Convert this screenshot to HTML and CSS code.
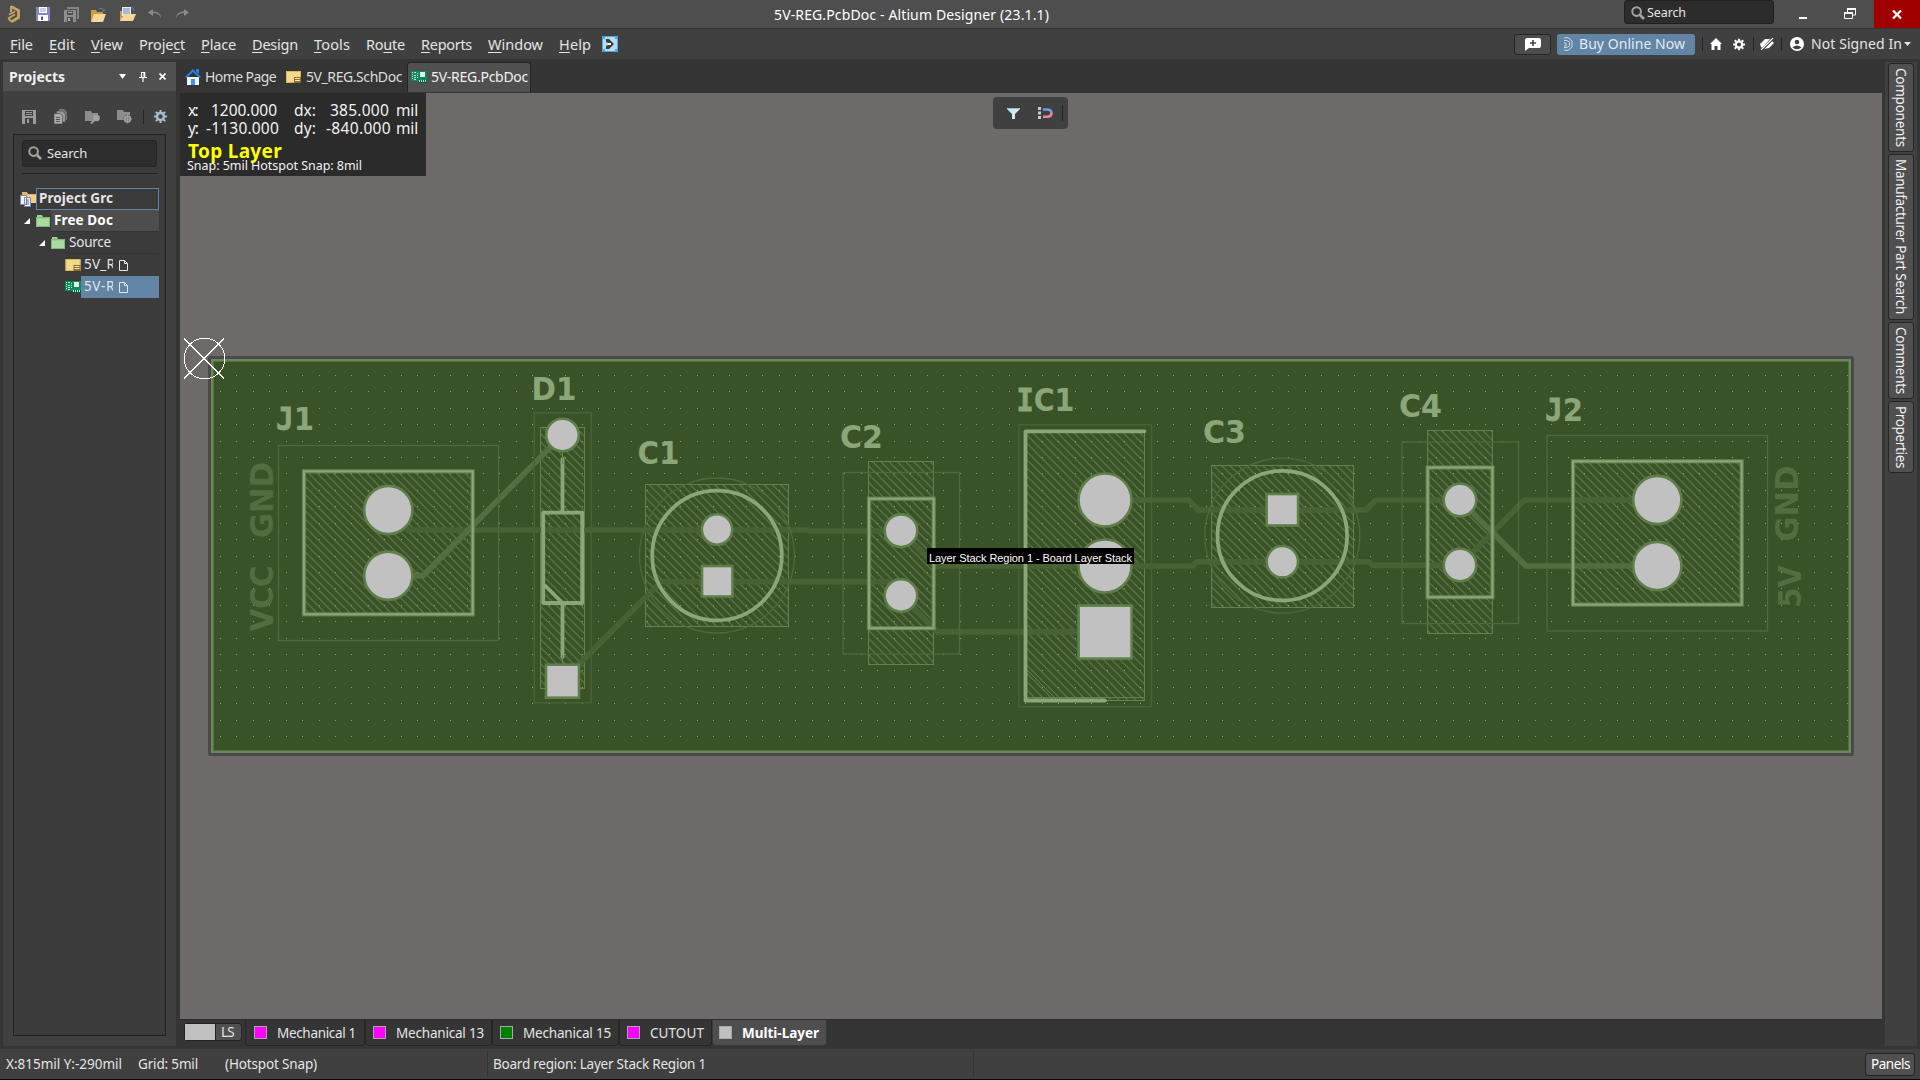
FILE: index.html
```
<!DOCTYPE html>
<html lang="en">
<head>
<meta charset="utf-8">
<title>5V-REG.PcbDoc - Altium Designer (23.1.1)</title>
<link rel="stylesheet" href="styles.css">
</head>
<body>
<svg class="defs" width="0" height="0">
  <defs>
    <symbol id="i-save" viewBox="0 0 14 14"><path fill-rule="evenodd" d="M0 0h14v14H0zM3 1v5h8V1zM3 8v6h8V8z" fill="currentColor"/><path d="M4 2h6v1H4zM4 4h6v1H4zM5 9h2v4H5z" fill="currentColor"/></symbol>
    <symbol id="i-sch" viewBox="0 0 15 12"><path d="M0 0h15v12H0z" fill="#f2d98c"/><path d="M.5 .5h14v11H.5z" fill="none" stroke="#d9b85c"/><path d="M8 6h7v6H8z" fill="#8a6c26"/><path d="M9 7h5v1H9zM9 9h5v1H9z" fill="#f7e6ae"/></symbol>
    <symbol id="i-pcb" viewBox="0 0 16 12"><path d="M0 0h16v10H0z" fill="#0b8a5c"/><path d="M3 1h2v1H3zM3 4h2v1H3zM3 6h2v1H3zM3 8h2v1H3zM1 1h1v1H1zM1 3h1v1H1zM1 5h1v1H1zM1 7h1v1H1zM6 2h1v1H6zM6 4h1v1H6zM6 6h1v1H6z" fill="#b6ecd4"/><path d="M9 1h5v5H9z" fill="#e4f5ec"/><path d="M6 9h10v3H8V9z" fill="#04613d"/><path d="M8 9h1v2H8zM10 9h1v2h-1zM12 9h1v2h-1zM14 9h1v2h-1z" fill="#b6ecd4"/></symbol>
    <symbol id="i-folder" viewBox="0 0 14 12"><path d="M0 2h1V0h5l1 2h7v10H0z" fill="#9bd08f"/><path d="M0 4h14v8H0z" fill="#a9dba0"/><path d="M.5 2.5h13v9H.5z" fill="none" stroke="#7fb877"/></symbol>
    <symbol id="i-doc" viewBox="0 0 9 11"><path d="M.5 .5h5l3 3v7h-8zM5.500 .5v3h3" fill="none" stroke="#e6e6e6"/></symbol>
    <symbol id="i-search" viewBox="0 0 14 14"><circle cx="5.600" cy="5.600" r="4.300" fill="none" stroke="#a3a3a3" stroke-width="2"/><path d="M9 9l4 4" stroke="#a3a3a3" stroke-width="2.600"/></symbol>
    <symbol id="i-gear" viewBox="0 0 14 14"><circle cx="7" cy="7" r="3.700" fill="none" stroke="currentColor" stroke-width="2.600"/><path d="M7 0v2.500M7 11.500V14M0 7h2.500M11.500 7H14M2 2l1.800 1.800M10.200 10.200L12 12M12 2l-1.800 1.800M3.800 10.200L2 12" stroke="currentColor" stroke-width="2.200"/></symbol>
    <symbol id="i-fold" viewBox="0 0 16 14"><path d="M0 1h6l1 2h6v8H0z" fill="#8d8d8d"/></symbol>
  </defs>
</svg>

<header class="titlebar">
  <div class="quick">
    <svg class="q1" width="14" height="18" viewBox="0 0 14 18"><path d="M4 1.500l7.500 4v7L5 16.500" fill="none" stroke="#c9a660" stroke-width="2.800"/><path d="M4 1v6M2 9.500l6-3M1 13.500l7-4M2.500 12v3l3 2" fill="none" stroke="#c9a660" stroke-width="1.900"/></svg>
    <svg class="q2" width="14" height="14" viewBox="0 0 14 14"><path d="M0 0h14v14H0z" fill="#8487c4"/><path d="M3 0h8v6H3zM2 8h10v6H2z" fill="#fff"/><path d="M4 1.500h6v1H4zM4 3.500h6v1H4z" fill="#9a9cc8"/><path d="M5 9.500h2V13H5z" fill="#555a88"/></svg>
    <svg class="q3" width="15" height="15" viewBox="0 0 15 15"><path d="M3 0h12v12h-2V2H3z" fill="#858585"/><path fill-rule="evenodd" d="M0 3h12v12H0zM3 4v4h6V4zM3 10v5h6v-5z" fill="#8f8f8f"/><path d="M4 5h4v1H4zM4 11h2v3H4z" fill="#aaa"/></svg>
    <svg class="q4" width="17" height="15" viewBox="0 0 17 15"><path d="M1 3h5l1 2h6v9H1z" fill="#cf9b45"/><path d="M4 7h12l-3 8H1z" fill="#f5d799"/><path d="M9 2q4-2 5 2m-2-1l2 1 1-2" fill="none" stroke="#4d87ac"/></svg>
    <svg class="q5" width="17" height="16" viewBox="0 0 17 16"><path d="M3 1h9v9H3z" fill="#e7edf6"/><path d="M4 3h7M4 5h7M4 7h7" stroke="#6b86b5"/><path d="M1 5h2v10H1z" fill="#cf9b45"/><path d="M5 8h12l-3 7H1z" fill="#f5d799"/><path d="M12 1q3 0 3 4" fill="none" stroke="#4d87ac"/></svg>
    <svg class="q6" width="14" height="11" viewBox="0 0 14 11"><path d="M13 11Q13 4 5 4V7L0 3.500 5 0v2.500Q14 2.500 13 11z" fill="#8b8b8b"/></svg>
    <svg class="q7" width="14" height="11" viewBox="0 0 14 11"><path d="M1 11Q1 4 9 4V7L14 3.500 9 0v2.500Q0 2.500 1 11z" fill="#8b8b8b"/></svg>
  </div>
  <div class="doc-title"><span data-w="275">5V-REG.PcbDoc - Altium Designer (23.1.1)</span></div>
  <div class="title-search"><svg width="14" height="14"><use href="#i-search"/></svg><span data-w="39">Search</span></div>
  <div class="winctl">
    <svg class="min" width="8" height="2"><path d="M0 0h8v2H0z" fill="#fff"/></svg>
    <svg class="res" width="12" height="11" viewBox="0 0 12 11"><path d="M3.500 4V1H11.500V7H8.500" fill="none" stroke="#fff"/><path d="M3 0h9v2H3z" fill="#fff"/><path d="M.5 4.500h8v6h-8z" fill="none" stroke="#fff"/><path d="M0 4h9v2H0z" fill="#fff"/></svg>
    <div class="close"><svg width="10" height="9" viewBox="0 0 10 9"><path d="M1 .5l8 8M9 .5l-8 8" stroke="#fff" stroke-width="2.200"/></svg></div>
  </div>
</header>

<nav class="menubar">
  <div class="menus">
    <span data-w="23"><u>F</u>ile</span><span data-w="26"><u>E</u>dit</span><span data-w="32"><u>V</u>iew</span><span data-w="46">Proje<u>c</u>t</span><span data-w="35"><u>P</u>lace</span><span data-w="46"><u>D</u>esign</span><span data-w="36"><u>T</u>ools</span><span data-w="39">Ro<u>u</u>te</span><span data-w="51"><u>R</u>eports</span><span data-w="55"><u>W</u>indow</span><span data-w="32"><u>H</u>elp</span>
    <svg class="run" width="16" height="16" viewBox="0 0 16 16"><path d="M0 0h16v16H0z" fill="#4aa8ea"/><path d="M3 1h10v2h2v10h-2v2H3v-2H1V3h2z" fill="#b9daf1"/><path d="M4 3h3l5 5-5 5H4V9.500h2v-3H4z" fill="#3c3c3c"/><path d="M6 7h3v2H6z" fill="#fff"/></svg>
  </div>
  <div class="account">
    <div class="comment"><svg width="16" height="13" viewBox="0 0 16 13"><path d="M2 0h12q2 0 2 2v6q0 2-2 2H4L0 13V2q0-2 2-2z" fill="#fff"/><path d="M8 2v6M5 5h6" stroke="#444" stroke-width="1.600"/></svg></div>
    <div class="buy"><svg width="10" height="14" viewBox="0 0 10 14"><path d="M1 1l4-.5 4 3.500v6L5 13.500 1 13M1 3.500h3L6.500 5v4L4 10.500H1M1 6h2v3H1" fill="none" stroke="#c7d7e6"/></svg><span data-w="106">Buy Online Now</span></div>
    <i class="sep s1"></i>
    <svg class="home" width="12" height="12" viewBox="0 0 12 12"><path d="M6 0l6 6h-1.500v6h-3V8h-3v4h-3V6H0z" fill="#fff"/></svg>
    <svg class="cog" width="12" height="13" viewBox="0 0 14 14"><use href="#i-gear"/></svg>
    <i class="sep s2"></i>
    <svg class="plug" width="14" height="12" viewBox="0 0 14 12"><path d="M1 9L0 6l5-5h5L2 10zM12 3l2 2-5 5-5 1 8-8z" fill="#fff"/><path d="M1 12L13 0" stroke="#fff" stroke-width="1.300"/><path d="M3 12L14 1" stroke="#404040" stroke-width=".8"/></svg>
    <i class="sep s3"></i>
    <svg class="user" width="14" height="14" viewBox="0 0 14 14"><circle cx="7" cy="7" r="7" fill="#fff"/><circle cx="7" cy="5" r="2.300" fill="#404040"/><path d="M2.500 10.500q4.500-4 9 0Q7 14 2.500 10.500z" fill="#404040"/></svg>
    <span class="signin" data-w="91">Not Signed In</span>
    <svg width="7" height="4" viewBox="0 0 7 4"><path d="M0 0h7L3.500 4z" fill="#e6e6e6"/></svg>
  </div>
</nav>

<main class="main">
  <aside class="panel">
    <div class="panel-head">
      <b data-w="56">Projects</b>
      <svg class="pa" width="7" height="5" viewBox="0 0 7 5"><path d="M0 0h7L3.500 5z" fill="#fff"/></svg>
      <svg class="pb" width="8" height="10" viewBox="0 0 8 10"><path d="M2.500 0v5M2 .5h4M5 0v5M5.700 0v5M0 5.500h8M4 5v5" stroke="#fff" fill="none" stroke-width="1.200"/></svg>
      <svg class="pc" width="7" height="7" viewBox="0 0 7 7"><path d="M.5 .5l6 6M6.500 .5l-6 6" stroke="#fff" stroke-width="1.700"/></svg>
    </div>
    <div class="panel-tools">
      <svg class="t1" width="14" height="14"><use href="#i-save"/></svg>
      <svg class="t2" width="14" height="15" viewBox="0 0 14 15"><path d="M5 0h5l3 3v8H5z" fill="#777"/><path d="M2.500 2h6l3 3v8h-9z" fill="#999" stroke="#404040" stroke-width=".6"/><path d="M0 4.500h6l2.500 2.500v8H0z" fill="#aaa" stroke="#404040" stroke-width=".6"/><path d="M2 8.500h4M2 10.500h4M2 12.500h4" stroke="#555"/></svg>
      <svg class="t3" width="16" height="14" viewBox="0 0 16 14"><use href="#i-fold"/><circle cx="11.500" cy="8" r="3.300" fill="#a3a3a3"/><path d="M9 10.500L6 13.500" stroke="#a3a3a3" stroke-width="1.800"/></svg>
      <svg class="t4" width="16" height="15" viewBox="0 0 16 15"><path d="M0 1h6l1 2h6v8H0z" fill="#8d8d8d"/><circle cx="10.500" cy="10" r="4.300" fill="#404040"/><circle cx="10.500" cy="10" r="2.800" fill="none" stroke="#a0a0a0" stroke-width="1.800"/><path d="M10.500 5.500v9M6 10h9M7.500 7l6 6M13.500 7l-6 6" stroke="#a0a0a0" stroke-width=".9"/></svg>
      <i class="sep"></i>
      <svg class="t5" width="13" height="13" viewBox="0 0 14 14"><use href="#i-gear"/></svg>
    </div>
    <div class="tree-box">
      <div class="tree-search"><svg width="14" height="14"><use href="#i-search"/></svg><span data-w="40">Search</span></div>
      <ul class="tree">
        <li class="r1"><svg width="16" height="15" viewBox="0 0 16 15"><path d="M2 0h5l1 2h8v9H2z" fill="#e3b566"/><path d="M3 3h13v8H3z" fill="#f3cf8c"/><path d="M.5 3.500h6v9h-6zM4.500 5.500h6v9h-6z" fill="#eef1fa" stroke="#7d86ac"/><path d="M6 8h3M6 10h3M6 12h3" stroke="#5f6fa5"/></svg><span class="box"><b data-w="74">Project Grc</b></span></li>
        <li class="r2"><svg class="arr" width="6" height="6"><path d="M6 0v6H0z" fill="#fff"/></svg><svg width="14" height="12"><use href="#i-folder"/></svg><span class="box"><b data-w="59">Free Doc</b></span></li>
        <li class="r3"><svg class="arr" width="6" height="6"><path d="M6 0v6H0z" fill="#fff"/></svg><svg width="14" height="12"><use href="#i-folder"/></svg><span class="box"><span data-w="42">Source</span></span></li>
        <li class="r4"><svg width="15" height="12"><use href="#i-sch"/></svg><span class="box"><span class="clip" data-w="31">5V_R</span><svg width="9" height="11"><use href="#i-doc"/></svg></span></li>
        <li class="r4 sel"><svg width="16" height="12"><use href="#i-pcb"/></svg><span class="box"><span class="clip" data-w="31">5V-R</span><svg width="9" height="11"><use href="#i-doc"/></svg></span></li>
      </ul>
    </div>
  </aside>

  <section class="work">
    <div class="tabs">
      <div class="tab home-tab"><svg width="16" height="16" viewBox="0 0 16 16"><path d="M2 8h12v8H2z" fill="#eef5fc"/><path d="M8 0l8 8-1.500 1L8 3 1.500 9 0 8z" fill="#2a83e8"/><path d="M11 0h3v5l-3-3z" fill="#2a83e8"/><path d="M6 10h4v6H6z" fill="#3b93f2"/></svg><span data-w="71">Home Page</span></div>
      <div class="tab sch-tab"><svg width="15" height="12"><use href="#i-sch"/></svg><span data-w="96">5V_REG.SchDoc</span></div>
      <div class="tab pcb-tab"><svg width="16" height="12"><use href="#i-pcb"/></svg><span data-w="97">5V-REG.PcbDoc</span></div>
    </div>

    <div class="canvas">
      <svg class="board" width="1702" height="926" viewBox="180 93 1702 926">
        <defs>
          <pattern id="hatch" width="8.220" height="8.220" patternUnits="userSpaceOnUse"><path d="M-1-1l11 11M7.220-1l3 3M-1 7.220l3 3" stroke="#66814f" stroke-width=".95"/></pattern>
        </defs>
        <rect x="209.500" y="357.500" width="1643" height="397" rx="1" fill="#3a5228" stroke="#4b4a4b" stroke-width="3"/>
        <rect x="212.500" y="360.500" width="1637" height="391" fill="none" stroke="#55713f" stroke-width="3"/>
        <rect x="212" y="360" width="1638" height="392" fill="none" stroke="#6b8857" stroke-width="2"/>

        <g class="hatched">
          <rect x="304" y="471" width="169" height="143"/>
          <rect x="540.500" y="427.500" width="44" height="261"/>
          <rect x="645.500" y="484.500" width="143" height="142"/>
          <rect x="868.500" y="461.500" width="65" height="203"/>
          <rect x="1026.500" y="431.500" width="118" height="269"/>
          <rect x="1211.500" y="465.500" width="142" height="142"/>
          <rect x="1427.500" y="430.500" width="65" height="203"/>
          <rect x="1573" y="461" width="169" height="143.500"/>
        </g>
        <path d="M1026 697.500h118M1027 670l29 29" stroke="#66814f" fill="none"/>

        <path id="dots" fill="#8ba677" shape-rendering="crispEdges"/>

        <g class="bottom-copper">
          <path d="M388 510l20 20H717 808l2 1h91L936 566H1105"/>
          <path d="M562.500 681L661 581.700H888L901 595.500 937 631.800H1105"/>
          <path d="M1105 500h83.500l10 10H1366l10-10h84"/>
          <path d="M1105 566h87.500l4-4.200H1369l4 3.500h87L1524.500 500H1657"/>
        </g>
        <g class="top-copper">
          <path d="M388 575.700h35L562.500 435"/>
          <path d="M1460 500l66 66h131"/>
        </g>

        <g class="court">
          <rect x="278.500" y="445.500" width="220" height="195"/>
          <rect x="843" y="472.500" width="116.500" height="181.500"/>
          <rect x="1402" y="442" width="116.500" height="181.500"/>
          <rect x="1547" y="435.500" width="220.500" height="195.500"/>
          <circle cx="717" cy="555.500" r="77.500"/>
          <circle cx="1282.300" cy="535.700" r="77.500"/>
        </g>
        <g class="court dim">
          <rect x="534.200" y="412.700" width="57" height="290"/>
          <rect x="1019" y="424.700" width="132.500" height="282"/>
        </g>

        <g class="silk-under">
          <rect x="304" y="471.300" width="168.700" height="143"/>
          <rect x="869" y="498.700" width="64.700" height="129.500"/>
          <rect x="1427.700" y="467.500" width="64.700" height="129.700"/>
          <rect x="1573" y="461.300" width="168.700" height="143.300"/>
        </g>
        <g class="silk">
          <rect x="304" y="471.300" width="168.700" height="143"/>
          <rect x="869" y="498.700" width="64.700" height="129.500"/>
          <rect x="1427.700" y="467.500" width="64.700" height="129.700"/>
          <rect x="1573" y="461.300" width="168.700" height="143.300"/>
        </g>
        <g class="silk bold">
          <circle cx="717" cy="555.500" r="64.800"/>
          <circle cx="1282.300" cy="535.700" r="64.800"/>
          <path d="M562.500 459V512.500M562.500 603V657M543.200 512.700h39v90.300h-39zM545 585.500l17.500 17.500"/>
          <path d="M1144.500 431.300H1025.500V700.500H1105"/>
        </g>
        <path d="M562.500 452v12M562.500 655v10" stroke="#66814f"/>

        <g class="pads">
          <circle cx="388.300" cy="510" r="24.100"/><circle cx="388.300" cy="575.700" r="24.100"/>
          <circle cx="562.500" cy="435" r="16.300"/><rect x="546" y="664.700" width="33" height="33"/>
          <circle cx="717" cy="529.500" r="15.200"/><rect x="702" y="566" width="30.500" height="30.500"/>
          <circle cx="901" cy="530.700" r="16.300"/><circle cx="901" cy="595.500" r="16.300"/>
          <circle cx="1105" cy="500" r="26.500"/><circle cx="1105" cy="566" r="26.500"/><rect x="1078.600" y="605.600" width="53" height="53"/>
          <rect x="1266.600" y="494" width="31.500" height="31.500"/><circle cx="1282.300" cy="561.700" r="15.700"/>
          <circle cx="1460" cy="500" r="16.300"/><circle cx="1460" cy="565" r="16.300"/>
          <circle cx="1657.300" cy="500" r="24.100"/><circle cx="1657.300" cy="566" r="24.100"/>
        </g>

        <g class="refdes">
          <text x="276" y="430" textLength="38" lengthAdjust="spacingAndGlyphs"><tspan class="slab">J</tspan>1</text>
          <text x="531.500" y="399.500" textLength="45" lengthAdjust="spacingAndGlyphs">D1</text>
          <text x="637.500" y="463.500" textLength="42" lengthAdjust="spacingAndGlyphs">C1</text>
          <text x="840" y="447.500" textLength="43" lengthAdjust="spacingAndGlyphs">C2</text>
          <text x="1016.500" y="410.500" textLength="58" lengthAdjust="spacingAndGlyphs"><tspan class="slab">I</tspan>C1</text>
          <text x="1203" y="443" textLength="43" lengthAdjust="spacingAndGlyphs">C3</text>
          <text x="1399" y="416.500" textLength="43" lengthAdjust="spacingAndGlyphs">C4</text>
          <text x="1545" y="420.500" textLength="38" lengthAdjust="spacingAndGlyphs"><tspan class="slab">J</tspan>2</text>
        </g>
        <g class="netname">
          <text transform="translate(273 538) rotate(-90)" textLength="76" lengthAdjust="spacingAndGlyphs">GND</text>
          <text transform="translate(273 631.500) rotate(-90)" textLength="66" lengthAdjust="spacingAndGlyphs">VCC</text>
          <text transform="translate(1798 541.500) rotate(-90)" textLength="76" lengthAdjust="spacingAndGlyphs">GND</text>
          <text transform="translate(1800.500 607.500) rotate(-90)" textLength="42" lengthAdjust="spacingAndGlyphs">5V</text>
        </g>

        <g class="origin"><circle cx="204.500" cy="358.500" r="20.300"/><path d="M184 338.500l40 40M224 338.500l-40 40"/></g>
      </svg>

      <div class="hud">
        <div class="coords">
          <span data-w="9">x:</span><span class="num in" data-w="66">1200.000</span><span class="d" data-w="22">dx:</span><span class="num in" data-w="59">385.000</span><span class="mil" data-w="22">mil</span>
          <span data-w="10">y:</span><span class="num" data-w="73">-1130.000</span><span class="d" data-w="22">dy:</span><span class="num" data-w="65">-840.000</span><span class="mil" data-w="22">mil</span>
        </div>
        <b class="layer" data-w="94">Top Layer</b>
        <div class="snap"><span data-w="175">Snap: 5mil Hotspot Snap: 8mil</span></div>
      </div>
      <div class="float-tools">
        <svg width="13" height="11" viewBox="0 0 13 11"><path d="M0 0h13v1L8 6v5H5V6L0 1z" fill="#cfeaf5"/><path d="M.5 .5h12" stroke="#8fb9cc"/></svg>
        <svg class="mag" width="15" height="12" viewBox="0 0 15 12"><path d="M5 2.500h5q3.500.5 3.500 3.500" fill="none" stroke="#6f9be8" stroke-width="2.600"/><path d="M5 9.700h5q3.500-.5 3.500-3.700" fill="none" stroke="#f08a92" stroke-width="2.600"/><path d="M0 0h3v3H0zM0 4.500h3v3H0zM0 9h3v3H0z" fill="#b9cfd2"/></svg>
        <i></i>
      </div>
      <div class="tip"><span data-w="203">Layer Stack Region 1 - Board Layer Stack</span></div>
    </div>

    <div class="layers">
      <div class="ls"><i></i><span data-w="13">LS</span></div>
      <div class="lt l1"><i class="mg"></i><span data-w="79">Mechanical 1</span></div>
      <div class="lt l2"><i class="mg"></i><span data-w="88">Mechanical 13</span></div>
      <div class="lt l3"><i class="gr"></i><span data-w="88">Mechanical 15</span></div>
      <div class="lt l4"><i class="mg"></i><span data-w="54">CUTOUT</span></div>
      <div class="lt l5"><i class="si"></i><b data-w="77">Multi-Layer</b></div>
    </div>
  </section>

  <aside class="side">
    <div class="vtab v1"><span data-h="79">Components</span></div>
    <div class="vtab v2"><span data-h="155">Manufacturer Part Search</span></div>
    <div class="vtab v3"><span data-h="67">Comments</span></div>
    <div class="vtab v4"><span data-h="62">Properties</span></div>
  </aside>
</main>

<footer class="status">
  <div class="st a"><span data-w="116">X:815mil Y:-290mil</span><span data-w="60">Grid: 5mil</span><span data-w="92">(Hotspot Snap)</span></div>
  <div class="st b"><span data-w="213">Board region: Layer Stack Region 1</span></div>
  <div class="st c"></div>
  <div class="panels"><span data-w="39">Panels</span></div>
</footer>
<script src="app.js"></script>
</body>
</html>
```
FILE: styles.css
```
* { box-sizing: border-box; }
body {
  margin: 0; width: 1920px; height: 1080px; overflow: hidden;
  display: flex; flex-direction: column;
  background: #353535; color: #e4e4e4;
  font-family: "Noto Sans", "Open Sans", sans-serif; font-size: 14px; line-height: 20px;
  white-space: nowrap;
}
svg { display: block; flex: none; }
span, b { flex: none; }
.defs { position: absolute; }

.titlebar { height: 29px; flex: none; background: #4e4e4e; border-bottom: 1px solid #343434; display: flex; align-items: flex-start; }
.quick { width: 774px; height: 28px; display: flex; align-items: center; padding-left: 7px; }
.q2 { margin-left: 15px; }
.q3 { margin-left: 14px; }
.q4 { margin-left: 11px; }
.q5 { margin-left: 12px; }
.q6 { margin-left: 12px; }
.q7 { margin-left: 13px; }
.doc-title { width: 850px; padding-top: 5px; color: #fff; }
.title-search { width: 150px; height: 24px; background: #2c2c2c; border: 1px solid #1f1f1f; border-radius: 3px; display: flex; align-items: center; padding: 1px 0 0 6px; gap: 2px; font-size: 12.500px; }
.winctl { display: flex; align-items: flex-start; }
.min { margin: 17px 0 0 25px; }
.res { margin: 8px 0 0 37px; }
.close { margin-left: 18px; width: 46px; height: 28px; background: #a00000; display: flex; align-items: center; justify-content: center; }

.menubar { height: 30px; flex: none; background: #404040; display: flex; justify-content: space-between; align-items: center; }
.menus { display: flex; gap: 16px; padding-left: 10px; align-items: center; font-size: 14.500px; }
.menus u { text-underline-offset: 2px; text-decoration-thickness: 1px; }
.run { margin-left: -5px; }
.account { width: 406px; display: flex; align-items: center; }
.comment { width: 37px; height: 21px; border: 1px solid #252525; border-radius: 3px; background: #4c4c4c; display: flex; align-items: center; justify-content: center; }
.buy { margin-left: 6px; width: 138px; height: 21px; border-radius: 3px; background: #6284a5; display: flex; align-items: center; padding-left: 6px; gap: 6px; color: #e3ebf2; }
.sep { width: 1px; height: 14px; background: #252525; }
.s1 { margin-left: 7px; }
.home { margin-left: 7px; }
.cog { margin-left: 11px; color: #fff; }
.s2 { margin-left: 8px; }
.plug { margin-left: 6px; }
.s3 { margin-left: 7px; }
.user { margin-left: 8px; }
.signin { margin: 0 2px 0 7px; }

.main { flex: 1; min-height: 0; display: flex; }
.panel { width: 173px; margin: 3px 4px 3px 3px; background: #404040; display: flex; flex-direction: column; }
.panel-head { height: 29px; background: #505050; display: flex; align-items: center; padding-left: 6px; color: #f0f0f0; }
.pa { margin-left: 54px; }
.pb { margin-left: 13px; }
.pc { margin-left: 12px; }
.panel-tools { height: 43px; display: flex; align-items: center; padding: 8px 0 0 19px; color: #9b9b9b; }
.t2 { margin-left: 18px; }
.t3 { margin-left: 17px; }
.t4 { margin-left: 16px; }
.panel-tools .sep { margin-left: 10px; }
.t5 { margin-left: 10px; color: #a9bfcc; }
.tree-box { margin: 0 10px; width: 153px; height: 902px; border: 1px solid #222; background: #3b3b3b; }
.tree-search { margin: 5px 8px 6px; height: 27px; border: 1px solid #252525; border-radius: 3px; background: #2d2d2d; display: flex; align-items: center; gap: 5px; padding: 0 0 2px 5px; font-size: 13px; }
.tree { list-style: none; margin: 0 8px; padding: 14px 0 0; border-top: 1px solid #222; }
.tree li { height: 22px; display: flex; align-items: center; margin-left: -2px; width: 139px; font-size: 13.500px; }
.tree .box { flex: 1; min-width: 0; height: 22px; display: flex; align-items: center; padding: 0 0 2px 3px; }
.tree .arr { margin-right: 6px; }
.tree .r1 .box { border: 1px solid #6284a5; padding-left: 2px; }
.r2 { padding-left: 4px; }
.r2 .box { margin-left: 1px; background: #4d4d4d; color: #fff; border-bottom: 1px solid #333; }
.tree .r2 .box, .tree .r3 .box { padding-bottom: 1px; }
.r3 { padding-left: 19px; }
.tree .r3 .box { padding-left: 4px; border-bottom: 1px solid #343434; }
.tree .r4 { padding-left: 45px; }
.r4 > svg { width: 16px; }
.r4 .clip { overflow: hidden; clip-path: inset(0 2px 0 0); }
.r4 .box svg { margin: 2px 0 0 4px; }
.sel .box { background: #6284a5; }

.work { width: 1702px; display: flex; flex-direction: column; }
.tabs { height: 34px; padding-top: 3px; display: flex; }
.tab { height: 31px; display: flex; align-items: center; gap: 4px; color: #dcdcdc; padding-bottom: 2px; }
.home-tab { padding-left: 5px; width: 106px; }
.sch-tab { width: 122px; gap: 5px; }
.pcb-tab { width: 124px; margin-left: -1px; padding-left: 3px; background: #505050; border: 1px solid #252525; border-bottom: 0; border-radius: 3px 3px 0 0; color: #f0f0f0; height: 30px; }
.canvas { flex: 1; background: #6e6a69; position: relative; }
.board { position: absolute; left: 0; top: 0; }
.hatched rect { fill: url(#hatch); stroke: #66814f; }
.bottom-copper path, .top-copper path { fill: none; stroke-width: 5.700px; stroke-linejoin: round; stroke-linecap: round; }
.bottom-copper path { stroke: #486234; }
.top-copper path { stroke: #536f41; }
.court * { fill: none; stroke: #4e6a3a; stroke-width: 1.300px; }
.court.dim * { stroke: #466132; stroke-width: 1.600px; }
.silk-under * { fill: none; stroke: #66834f; stroke-width: 4.200px; }
.silk * { fill: none; stroke: #8ba678; stroke-width: 2px; }
.silk.bold * { stroke-width: 3.800px; stroke-linecap: round; stroke-linejoin: round; }
.pads * { fill: #c2c1c2; stroke: #5f7e4a; stroke-width: 2.600px; }
.refdes text, .netname text { font-family: "DejaVu Sans", sans-serif; font-weight: 700; font-size: 32px; fill: #8ba678; }
.refdes .slab { font-family: "DejaVu Sans Mono", monospace; stroke: #8ba678; stroke-width: .8px; }
.netname text { fill: #526d3f; }
.origin * { fill: none; stroke: #fff; stroke-width: 1px; shape-rendering: crispEdges; }

.hud { position: absolute; left: 0; top: 0; width: 246px; height: 83px; background: #2b2b2b; padding: 8px 0 0 7px; display: flex; flex-direction: column; color: #f2f2f2; }
.coords { display: grid; grid-template-columns: 17px 74px 41px 71px 30px; grid-auto-rows: 18px; line-height: 18px; font-size: 15.500px; padding-left: 1px; }
.coords > * { justify-self: start; }
.coords .num { justify-self: end; }
.coords .in { margin-right: 2px; }
.coords .d { margin-left: 15px; }
.coords .mil { margin-left: 5px; }
.layer { font-size: 19px; color: #ff0; line-height: 22px; align-self: flex-start; margin: 3px 0 0 1px; }
.snap { font-size: 12.500px; line-height: 14px; margin-top: -3px; }
.float-tools { position: absolute; left: 813px; top: 4px; width: 75px; height: 32px; background: #404040; border-radius: 4px; display: flex; align-items: center; padding-left: 14px; }
.mag { margin-left: 18px; }
.float-tools i { width: 1px; height: 16px; background: #222; margin-left: 9px; }
.tip { position: absolute; left: 747px; top: 455px; width: 207px; height: 16px; background: #000; color: #fff; font: 11px/20px "Liberation Sans", Arial, sans-serif; padding-left: 2px; }

.layers { height: 30px; display: flex; font-size: 13.500px; border-top: 1px solid #2c2c2c; padding-left: 4px; }
.ls { margin-top: 3px; width: 58px; height: 18px; display: flex; align-items: center; background: #505050; border: 1px solid #222; border-radius: 3px; gap: 5px; }
.ls i { width: 31px; height: 16px; background: #c0c0c0; border-right: 1px solid #222; }
.lt { height: 26px; display: flex; align-items: center; border: 1px solid #252525; border-top: 0; border-radius: 0 0 4px 4px; padding-left: 7px; }
.lt i { width: 13px; height: 13px; border: 1px solid #a8a8a8; margin-right: 10px; }
.l1 { margin-left: 3px; width: 120px; padding-left: 8px; }
.l2 { width: 127px; }
.l3 { width: 127px; }
.l4 { width: 93px; }
.l5 { width: 115px; background: #4e4e4e; color: #fff; border-color: #3a3a3a; padding-left: 6px; }
.lt .mg { background: #f0f; }
.lt .gr { background: #008000; }
.lt .si { background: #c0c0c0; }

.side { margin: 3px 0 3px 3px; width: 32px; background: #404040; padding: 1px 3px; display: flex; flex-direction: column; }
.vtab { writing-mode: vertical-rl; width: 26px; background: #505050; border: 1px solid #252525; border-radius: 3px; color: #f0f0f0; display: flex; align-items: center; padding-top: 4px; font-size: 13.500px; }
.v1 { height: 89px; margin-bottom: 2px; }
.v2 { height: 166px; margin-bottom: 2px; }
.v3 { height: 77px; margin-bottom: 2px; }
.v4 { height: 72px; }

.status { height: 31px; flex: none; background: #404040; border-bottom: 1px solid #0a0a0a; display: flex; align-items: center; font-size: 13.500px; }
.st { height: 24px; border-right: 1px solid #333; display: flex; align-items: center; padding-bottom: 1px; }
.a { width: 488px; padding-left: 6px; }
.a span:nth-child(2) { margin-left: 16px; }
.a span:nth-child(3) { margin-left: 27px; }
.b { width: 486px; padding-left: 5px; }
.c { width: 891px; border: 0; }
.panels { width: 50px; height: 23px; border: 1px solid #222; border-radius: 3px; background: #505050; display: flex; align-items: center; padding-left: 5px; color: #fff; }
```
FILE: app.js
```
// Visible grid: one-pixel dots snapped to whole pixels.
let d = "";
for (let j = 0; j < 23; j++)
  for (let i = 0; i < 100; i++)
    d += `M${Math.round(220 + i * 16.434)} ${Math.round(375 + j * 16.41)}h1v1h-1z`;
document.getElementById("dots").setAttribute("d", d);

// Tighten label tracking so each caption fills its allotted length.
for (const el of document.querySelectorAll("[data-w],[data-h]")) {
  const vertical = el.dataset.h !== undefined;
  const r = el.getBoundingClientRect();
  const want = +(vertical ? el.dataset.h : el.dataset.w);
  const have = vertical ? r.height : r.width;
  el.style.letterSpacing = (want - have) / el.textContent.length + "px";
}
```
